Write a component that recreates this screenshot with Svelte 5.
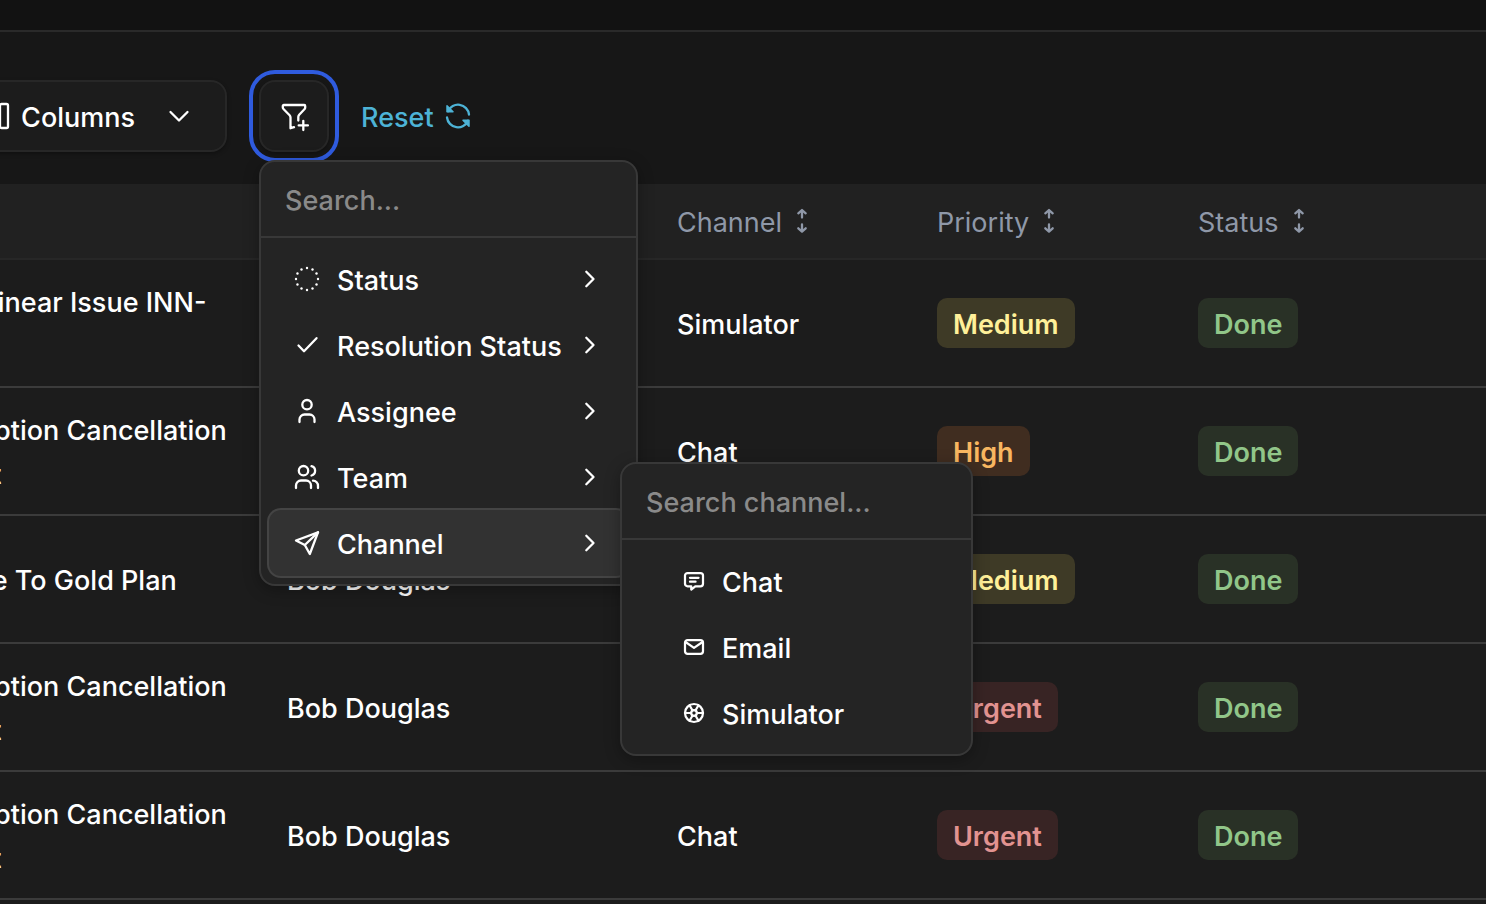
<!--
  Conversations table with its toolbar.
  The filter button opens a menu; "Channel" opens a nested menu.
-->
<script lang="ts">
  type IconName =
    | 'columns' | 'down' | 'right' | 'filter' | 'refresh' | 'sort'
    | 'dots' | 'check' | 'user' | 'users' | 'send'
    | 'chat' | 'mail' | 'wheel';

  interface Ticket {
    title: string;
    assignee: string;
    channel: string;
    priority: string;
    status: string;
  }

  const headings = ['Title', 'Assignee', 'Channel', 'Priority', 'Status'];

  const tickets: Ticket[] = [
    { title: 'Group Linear Issue INN-4021', assignee: '', channel: 'Simulator', priority: 'Medium', status: 'Done' },
    { title: 'Subscription Cancellation Request', assignee: '', channel: 'Chat', priority: 'High', status: 'Done' },
    { title: 'Upgrade To Gold Plan', assignee: 'Bob Douglas', channel: 'Chat', priority: 'Medium', status: 'Done' },
    { title: 'Subscription Cancellation Request', assignee: 'Bob Douglas', channel: 'Chat', priority: 'Urgent', status: 'Done' },
    { title: 'Subscription Cancellation Request', assignee: 'Bob Douglas', channel: 'Chat', priority: 'Urgent', status: 'Done' },
  ];

  const filters: { label: string; icon: IconName }[] = [
    { label: 'Status', icon: 'dots' },
    { label: 'Resolution Status', icon: 'check' },
    { label: 'Assignee', icon: 'user' },
    { label: 'Team', icon: 'users' },
    { label: 'Channel', icon: 'send' },
  ];

  const channels: { label: string; icon: IconName }[] = [
    { label: 'Chat', icon: 'chat' },
    { label: 'Email', icon: 'mail' },
    { label: 'Simulator', icon: 'wheel' },
  ];

  // Twelve points round the dotted circle, six spokes for the wheel
  const dots = Array.from({ length: 12 }, (_, i) => (i * Math.PI) / 6);
  const spokes = Array.from({ length: 6 }, (_, i) => i * 60);

  let menuOpen = $state(true);
  let active = $state('Channel');
</script>

{#snippet icon(name: IconName)}
  <svg class="icon" viewBox="0 0 28 28" aria-hidden="true">
    {#if name === 'columns'}
      <rect x="5" y="2" width="8" height="24" rx="1.5" />
      <rect x="19" y="2" width="8" height="24" rx="1.5" />
    {:else if name === 'down'}
      <path d="M5.5 10l8.5 8.5L22.5 10" />
    {:else if name === 'right'}
      <path d="M10.3 6.8L17.5 14L10.3 21.2" />
    {:else if name === 'filter'}
      <path d="M14 25.2L10.5 26.2V15.5c0-1-.3-1.6-.9-2.3L3.7 7.3C3.2 6.8 2.8 6.2 2.8 5.5V4c0-.6.4-1 1-1h20.4c.6 0 1 .4 1 1v1.5c0 .7-.3 1.3-.8 1.8l-5.2 5.4c-.6.7-.9 1.3-.9 2.3V18.5" />
      <path d="M23.3 18.8v9.2M18.7 23.4h9.2" />
    {:else if name === 'refresh'}
      <path d="M25 12.5A11 11 0 0 0 4 9.3" />
      <path d="M3 3.8v6h6z" fill="currentColor" stroke-width="1.5" />
      <path d="M3 15.5A11 11 0 0 0 24 18.7" />
      <path d="M25 24.2v-6h-6z" fill="currentColor" stroke-width="1.5" />
    {:else if name === 'sort'}
      <path d="M10.3 6.3L14 3l3.7 3.3M14 3.5v7M10.3 21.3L14 24.6l3.7-3.3M14 24v-6.5" />
    {:else if name === 'dots'}
      {#each dots as a}
        <circle class="solid" cx={14 + 11 * Math.cos(a)} cy={14 + 11 * Math.sin(a)} r="1.2" />
      {/each}
    {:else if name === 'check'}
      <path d="M5.5 14.5L11 20.2L23.5 7.2" />
    {:else if name === 'user'}
      <circle cx="14" cy="7.7" r="4.7" />
      <path d="M6.5 25v-2.5a5 5 0 0 1 5-5h5a5 5 0 0 1 5 5V25" />
    {:else if name === 'users'}
      <circle cx="10.5" cy="7.7" r="4.7" />
      <path d="M3 25v-2.5a5 5 0 0 1 5-5h5a5 5 0 0 1 5 5V25" />
      <path d="M18.5 3.2a4.8 4.8 0 0 1 0 9.3M20 17.7a5 5 0 0 1 5 5.3v2" />
    {:else if name === 'send'}
      <path d="M3 11.5L25 3.3L16.8 25L11.8 16z" />
      <path d="M11.8 16L25 3.3" />
    {:else if name === 'chat'}
      <path d="M6.5 4.7h15a3 3 0 0 1 3 3v9.5a3 3 0 0 1-3 3h-6L10.8 24v-3.8H6.5a3 3 0 0 1-3-3V7.7a3 3 0 0 1 3-3z" />
      <path d="M9.3 10.3h10M9.3 14.8h6.5" />
    {:else if name === 'mail'}
      <rect x="3.5" y="6" width="21" height="16" rx="3" />
      <path d="M4.5 8.5l9.5 6.5l9.5-6.5" />
    {:else if name === 'wheel'}
      <circle cx="14" cy="14" r="10.5" />
      <circle cx="14" cy="14" r="3.3" />
      {#each spokes as deg}
        <path d="M17.3 14H24.5" transform="rotate({deg} 14 14)" />
      {/each}
    {/if}
  </svg>
{/snippet}

<div class="page">
  <div class="topbar"></div>

  <main class="view">
    <div class="toolbar">
      <button class="button button--columns" type="button">
        {@render icon('columns')}
        <span class="label">Columns</span>
        {@render icon('down')}
      </button>

      <div class="filter">
        <button
          class="button button--filter"
          class:button--focus={menuOpen}
          type="button"
          aria-label="Add filter"
          aria-expanded={menuOpen}
          onclick={() => (menuOpen = !menuOpen)}
        >
          {@render icon('filter')}
        </button>

        {#if menuOpen}
          <div class="menu">
            <input class="menu__search" type="text" placeholder="Search..." aria-label="Search filters" />
            <ul class="menu__list">
              {#each filters as item}
                <li class="menu__entry">
                  <button
                    class="item"
                    class:item--active={item.label === active}
                    type="button"
                    onclick={() => (active = item.label)}
                  >
                    {@render icon(item.icon)}
                    <span class="label">{item.label}</span>
                    {@render icon('right')}
                  </button>

                  {#if item.label === 'Channel' && active === 'Channel'}
                    <div class="menu menu--nested">
                      <input class="menu__search" type="text" placeholder="Search channel..." aria-label="Search channel" />
                      <ul class="menu__list">
                        {#each channels as channel}
                          <li>
                            <button class="item item--nested" type="button">
                              {@render icon(channel.icon)}
                              <span class="label">{channel.label}</span>
                            </button>
                          </li>
                        {/each}
                      </ul>
                    </div>
                  {/if}
                </li>
              {/each}
            </ul>
          </div>
        {/if}
      </div>

      <button class="reset" type="button">
        <span class="label">Reset</span>
        {@render icon('refresh')}
      </button>
    </div>

    <table class="table">
      <colgroup>
        <col class="col-title" />
        <col class="col-assignee" />
        <col class="col-channel" />
        <col class="col-priority" />
        <col />
      </colgroup>
      <thead>
        <tr>
          {#each headings as heading}
            <th scope="col">
              <button class="sort" type="button">
                <span class="label">{heading}</span>
                {@render icon('sort')}
              </button>
            </th>
          {/each}
        </tr>
      </thead>
      <tbody>
        {#each tickets as ticket}
          <tr>
            <td><div class="label">{ticket.title}</div></td>
            <td><div class="label">{ticket.assignee}</div></td>
            <td><div class="label">{ticket.channel}</div></td>
            <td><span class="badge badge--{ticket.priority.toLowerCase()}">{ticket.priority}</span></td>
            <td><span class="badge badge--done">{ticket.status}</span></td>
          </tr>
        {/each}
      </tbody>
    </table>
  </main>
</div>

<style>
  :global(body) {
    margin: 0;
    background: #1c1c1c;
  }

  /* ── Page shell ──────────────────────────────────────────────────────── */
  .page {
    --line: #383838;
    min-height: 100vh;
    overflow: hidden;
    box-sizing: border-box;
    color: #fff;
    font-family: Inter, "Liberation Sans", sans-serif;
    font-size: 27px;
    font-weight: 500;
    line-height: 44px;
  }

  .page * {
    box-sizing: border-box;
  }

  button,
  input {
    margin: 0;
    padding: 0;
    border: 0;
    background: none;
    color: inherit;
    font: inherit;
    outline: none;
  }

  .topbar {
    height: 32px;
    border-bottom: 2px solid #2a2a2a;
    background: #121212;
  }

  /* The view is wider than the window and starts off its left edge */
  .view {
    margin-left: -104px;
  }

  .icon {
    flex: none;
    width: 28px;
    height: 28px;
    fill: none;
    stroke: currentColor;
    stroke-width: 2.3;
    stroke-linecap: round;
    stroke-linejoin: round;
    overflow: visible;
  }

  .solid {
    fill: currentColor;
    stroke: none;
  }

  /* Text sits slightly low beside its icon or badge */
  .label {
    padding-top: 4px;
  }

  /* ── Toolbar ─────────────────────────────────────────────────────────── */
  .toolbar {
    display: flex;
    align-items: center;
    gap: 32px;
    padding: 48px 32px 32px;
    background: #171717;
  }

  .button {
    display: flex;
    align-items: center;
    height: 72px;
    border: 2px solid #272727;
    border-radius: 16px;
    background: #1c1c1c;
    box-shadow: 0 2px 4px rgba(0, 0, 0, 0.3);
  }

  .button--columns {
    width: 299px;
    padding: 0 32px;
    gap: 12px;
    justify-content: flex-end;
  }

  .button--columns .label {
    margin-right: 18px;
  }

  .button--filter {
    width: 70px;
    justify-content: center;
  }

  .button--focus {
    outline: 4px solid #2f5bde;
    outline-offset: 6px;
  }

  .reset {
    display: flex;
    align-items: center;
    gap: 10px;
    color: #4db3d6;
  }

  /* ── Menus ───────────────────────────────────────────────────────────── */
  .filter {
    position: relative;
  }

  .menu {
    position: absolute;
    z-index: 1;
    top: 80px;
    left: 0;
    width: 379px;
    border: 2px solid var(--line);
    border-radius: 16px;
    background: #242424;
    box-shadow: 0 4px 16px rgba(0, 0, 0, 0.3);
  }

  .menu--nested {
    top: -48px;
    left: 351px;
    width: 353px;
  }

  .menu__search {
    display: block;
    width: 100%;
    height: 76px;
    padding: 2px 24px 0;
    border-bottom: 2px solid var(--line);
  }

  .menu__search::placeholder {
    color: #8a8a8a;
    opacity: 1;
  }

  .menu__list {
    margin: 0;
    padding: 8px;
    list-style: none;
  }

  .menu__entry {
    position: relative;
  }

  .item {
    display: flex;
    align-items: center;
    gap: 16px;
    width: 100%;
    height: 66px;
    padding: 0 24px;
    border-radius: 12px;
    text-align: left;
    white-space: nowrap;
  }

  .item .label {
    flex: 1;
    min-width: 0;
  }

  .item--active {
    background: #323232;
    box-shadow: 0 0 0 2px #444;
  }

  .item--nested {
    padding-left: 52px;
  }

  .item--nested .icon {
    width: 24px;
    height: 24px;
    stroke-width: 2.6;
  }

  /* ── Table ───────────────────────────────────────────────────────────── */
  .table {
    width: 100%;
    border-collapse: separate;
    border-spacing: 0;
    table-layout: fixed;
  }

  .col-title    { width: 375px; }
  .col-assignee { width: 390px; }
  .col-channel  { width: 260px; }
  .col-priority { width: 261px; }

  th {
    height: 76px;
    padding: 0 16px;
    border-bottom: 2px solid #272727;
    background: #212121;
    color: #8f98a8;
    font-weight: 400;
    text-align: left;
  }

  th:first-child,
  td:first-child {
    padding-left: 0;
  }

  .sort {
    display: flex;
    align-items: center;
    gap: 6px;
  }

  td {
    height: 128px;
    padding: 0 16px;
    border-bottom: 2px solid #3b3b3b;
    vertical-align: middle;
  }

  .badge {
    display: inline-block;
    height: 50px;
    padding: 2px 16px;
    border-radius: 10px;
    font-weight: 600;
    line-height: 50px;
    vertical-align: middle;
  }

  .badge--medium { background: #3e3a26; color: #fff099; }
  .badge--high   { background: #402d20; color: #f8b660; }
  .badge--urgent { background: #382424; color: #e29391; }
  .badge--done   { background: #293126; color: #91c689; }
</style>
